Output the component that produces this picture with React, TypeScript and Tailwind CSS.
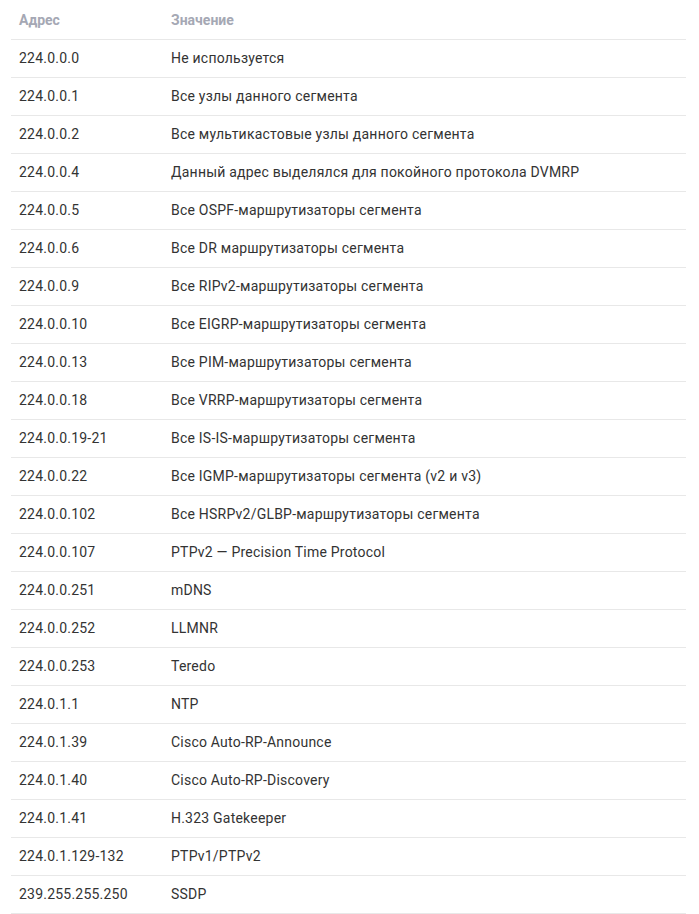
import React from 'react';

const rows: [string, string][] = [
  ['224.0.0.0', 'Не используется'],
  ['224.0.0.1', 'Все узлы данного сегмента'],
  ['224.0.0.2', 'Все мультикастовые узлы данного сегмента'],
  ['224.0.0.4', 'Данный адрес выделялся для покойного протокола DVMRP'],
  ['224.0.0.5', 'Все OSPF-маршрутизаторы сегмента'],
  ['224.0.0.6', 'Все DR маршрутизаторы сегмента'],
  ['224.0.0.9', 'Все RIPv2-маршрутизаторы сегмента'],
  ['224.0.0.10', 'Все EIGRP-маршрутизаторы сегмента'],
  ['224.0.0.13', 'Все PIM-маршрутизаторы сегмента'],
  ['224.0.0.18', 'Все VRRP-маршрутизаторы сегмента'],
  ['224.0.0.19-21', 'Все IS-IS-маршрутизаторы сегмента'],
  ['224.0.0.22', 'Все IGMP-маршрутизаторы сегмента (v2 и v3)'],
  ['224.0.0.102', 'Все HSRPv2/GLBP-маршрутизаторы сегмента'],
  ['224.0.0.107', 'PTPv2 — Precision Time Protocol'],
  ['224.0.0.251', 'mDNS'],
  ['224.0.0.252', 'LLMNR'],
  ['224.0.0.253', 'Teredo'],
  ['224.0.1.1', 'NTP'],
  ['224.0.1.39', 'Cisco Auto-RP-Announce'],
  ['224.0.1.40', 'Cisco Auto-RP-Discovery'],
  ['224.0.1.41', 'H.323 Gatekeeper'],
  ['224.0.1.129-132', 'PTPv1/PTPv2'],
  ['239.255.255.250', 'SSDP'],
];

const App: React.FC = () => {
  return (
    <div className="min-h-screen bg-white px-[11px] font-['Roboto',sans-serif] text-[14px]">
      <table className="w-[675px] border-collapse">
        <thead>
          <tr className="border-b border-[#e8e8e8]">
            <th className="h-[39px] w-[152px] px-2 pt-[2px] text-left font-bold text-[#a5a8b4]">Адрес</th>
            <th className="h-[39px] px-2 pt-[2px] text-left font-bold text-[#a5a8b4]">Значение</th>
          </tr>
        </thead>
        <tbody>
          {rows.map(([addr, val]) => (
            <tr key={addr} className="border-b border-[#e8e8e8]">
              <td className="h-[38px] px-2 tracking-[0.22px] text-[#333]">{addr}</td>
              <td className="h-[38px] px-2 tracking-[0.22px] text-[#333]">{val}</td>
            </tr>
          ))}
        </tbody>
      </table>
    </div>
  );
};

export default App;
